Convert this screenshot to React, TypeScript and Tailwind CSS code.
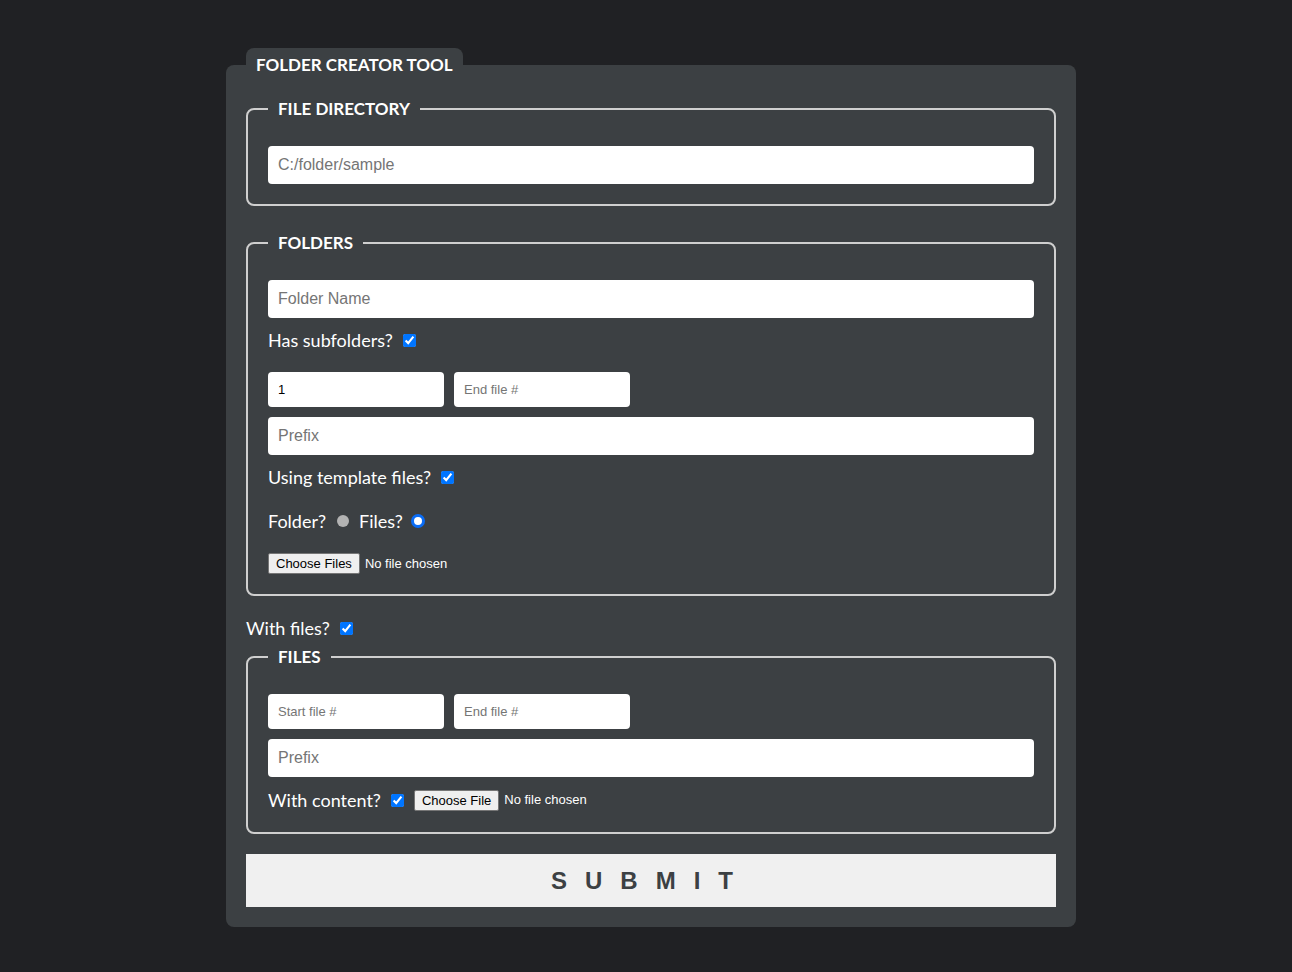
import { ReactNode } from "react";

const Section = ({ title, children }: { title: string; children: ReactNode }) => (
  <fieldset className="border-2 border-[#cfcfcf] rounded-lg px-[20px] pt-[25px] pb-[20px]">
    <legend className="px-[10px] text-[17px] leading-[24px] font-bold text-white">{title}</legend>
    {children}
  </fieldset>
);

const TextInput = ({ placeholder, value, small }: { placeholder: string; value?: string; small?: boolean }) => (
  <input
    type="text"
    placeholder={placeholder}
    defaultValue={value}
    className={
      small
        ? "w-[176px] h-[35px] bg-white rounded-[4px] pl-[10px] text-[13px] text-black placeholder:text-[#757575] font-['Liberation_Sans',Arial,sans-serif] outline-none"
        : "w-full h-[38px] bg-white rounded-[4px] pl-[10px] text-[16px] text-black placeholder:text-[#757575] font-['Liberation_Sans',Arial,sans-serif] outline-none"
    }
  />
);

const Check = () => (
  <input type="checkbox" defaultChecked className="ml-[10px] w-[13px] h-[13px] accent-[#0075ff]" />
);

const FilePicker = ({ label }: { label: string }) => (
  <div className="flex items-center font-['Liberation_Sans',Arial,sans-serif] text-[13px]">
    <button
      type="button"
      className="h-[21px] px-[7px] bg-[#efefef] border border-[#767676] rounded-[2px] text-black leading-none"
    >
      {label}
    </button>
    <span className="ml-[5px] text-white">No file chosen</span>
  </div>
);

export default function App() {
  return (
    <div className="min-h-screen bg-[#202124] flex justify-center pl-[10px] pt-[65px] pb-[45px] font-['Lato','Noto_Sans',sans-serif]">
      <div className="w-[850px] h-fit bg-[#3c4043] rounded-lg px-[20px] pb-[20px]">
        <div className="-mt-[17px] w-fit bg-[#3c4043] rounded-t-lg px-[10px] pt-[5px] text-[17px] leading-[24px] font-bold text-white">
          FOLDER CREATOR TOOL
        </div>

        <div className="mt-[20px]">
          <Section title="FILE DIRECTORY">
            <TextInput placeholder="C:/folder/sample" />
          </Section>
        </div>

        <div className="mt-[25px]">
          <Section title="FOLDERS">
            <TextInput placeholder="Folder Name" />
            <label className="mt-[10px] flex items-center text-[18px] leading-[24px] text-white">
              Has subfolders?
              <Check />
            </label>
            <div className="mt-[20px] flex gap-[10px]">
              <TextInput placeholder="Start file #" value="1" small />
              <TextInput placeholder="End file #" small />
            </div>
            <div className="mt-[10px]">
              <TextInput placeholder="Prefix" />
            </div>
            <label className="mt-[10px] flex items-center text-[18px] leading-[24px] text-white">
              Using template files?
              <Check />
            </label>
            <div className="mt-[20px] flex items-center text-[18px] leading-[24px] text-white">
              <span>Folder?</span>
              <span className="ml-[11px] w-[12px] h-[12px] rounded-full bg-[#b3b3b3]" />
              <span className="ml-[10px]">Files?</span>
              <span className="ml-[8px] w-[14px] h-[14px] rounded-full border-[3px] border-[#0a6cf5] bg-white" />
            </div>
            <div className="mt-[20px]">
              <FilePicker label="Choose Files" />
            </div>
          </Section>
        </div>

        <label className="mt-[20px] flex items-center text-[18px] leading-[24px] text-white">
          With files?
          <Check />
        </label>

        <div className="mt-[5px]">
          <Section title="FILES">
            <div className="flex gap-[10px]">
              <TextInput placeholder="Start file #" small />
              <TextInput placeholder="End file #" small />
            </div>
            <div className="mt-[10px]">
              <TextInput placeholder="Prefix" />
            </div>
            <div className="mt-[11px] flex items-center text-[18px] leading-[24px] text-white">
              <span>With content?</span>
              <Check />
              <div className="ml-[10px]">
                <FilePicker label="Choose File" />
              </div>
            </div>
          </Section>
        </div>

        <button
          type="button"
          className="mt-[20px] w-full h-[53px] bg-[#f0f0f0] text-[#3c4043] text-[24px] font-black tracking-[18px] font-['Liberation_Sans',Arial,sans-serif]"
        >
          SUBMIT
        </button>
      </div>
    </div>
  );
}
